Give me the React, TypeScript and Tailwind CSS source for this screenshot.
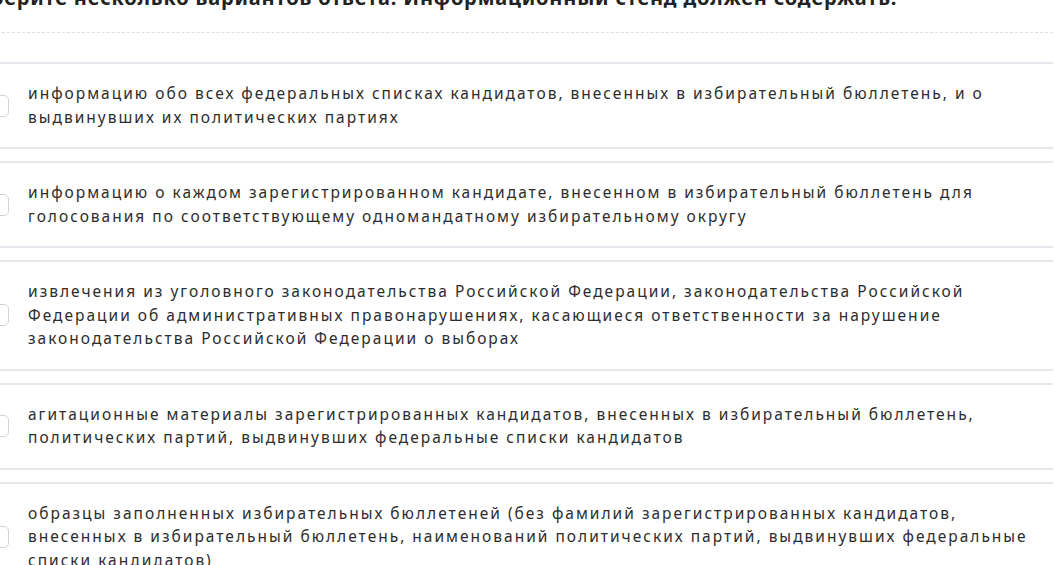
import React from "react";

const options = [
  "информацию обо всех федеральных списках кандидатов, внесенных в избирательный бюллетень, и о выдвинувших их политических партиях",
  "информацию о каждом зарегистрированном кандидате, внесенном в избирательный бюллетень для голосования по соответствующему одномандатному избирательному округу",
  "извлечения из уголовного законодательства Российской Федерации, законодательства Российской Федерации об административных правонарушениях, касающиеся ответственности за нарушение законодательства Российской Федерации о выборах",
  "агитационные материалы зарегистрированных кандидатов, внесенных в избирательный бюллетень, политических партий, выдвинувших федеральные списки кандидатов",
  "образцы заполненных избирательных бюллетеней (без фамилий зарегистрированных кандидатов, внесенных в избирательный бюллетень, наименований политических партий, выдвинувших федеральные списки кандидатов)",
];

export default function App() {
  return (
    <div
      className="h-[565px] w-[1054px] overflow-hidden bg-white text-[#2d2d2d]"
      style={{ fontFamily: "'Noto Sans', 'Open Sans', sans-serif" }}
    >
      <div className="ml-[-33px] mr-[1px] mt-[-16px] flex flex-col">
        <h2 className="-ml-[8px] whitespace-nowrap text-[20px] font-bold leading-[28px] tracking-[0.82px] text-[#222]">
          Выберите несколько вариантов ответа. Информационный стенд должен содержать:
        </h2>
        <div className="mt-[20px] border-t border-dashed border-[#dcdfe3]" />
        <div className="mt-[29px] flex flex-col gap-[12px]">
          {options.map((text, i) => (
            <label
              key={i}
              className="flex items-center gap-[19px] border-y-2 border-[#e4e7eb] bg-white py-[18px] pl-[20px] pr-[16px]"
            >
              <span className="h-[22px] w-[22px] shrink-0 rounded-[5px] border-[1.5px] border-[#cfd3d8] bg-white" />
              <span className="text-[15.5px] leading-[23.5px] tracking-[2px]">{text}</span>
            </label>
          ))}
        </div>
      </div>
    </div>
  );
}
